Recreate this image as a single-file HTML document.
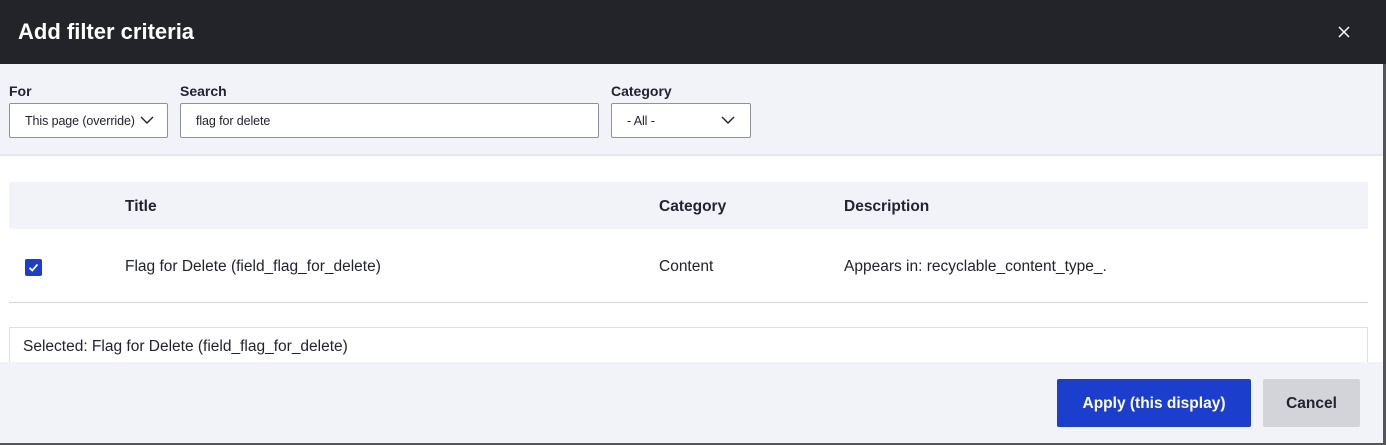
<!DOCTYPE html>
<html><head><style>
*{box-sizing:border-box;margin:0;padding:0}
body{width:1386px;height:445px;overflow:hidden;background:#fff;font-family:"Liberation Sans",sans-serif;color:#222330;position:relative}
.hdr{position:absolute;left:0;top:0;width:1386px;height:64px;background:#232429;color:#fff}
.hdr h1{position:absolute;left:18px;top:19px;font-size:22px;font-weight:bold}
.x{position:absolute;left:1338px;top:26px;width:12px;height:12px}
.filt{position:absolute;left:0;top:64px;width:1383px;height:92px;background:#f2f3f8;border-bottom:2px solid #e6e7ee}
.lbl{position:absolute;top:19px;font-size:14px;font-weight:bold}
.inp{position:absolute;top:39px;height:35px;background:#fff;border:1px solid #8e929c;border-radius:2px;font-size:12.5px;padding:10px 0 0 15px;letter-spacing:-0.1px}
.chev{position:absolute;top:12px;width:14px;height:9px}
.th{position:absolute;left:9px;top:182px;width:1359px;height:47px;background:#f2f3f8}
.th span,.row span{position:absolute;font-size:15.5px}
.th span{top:16px;font-weight:bold}
.row{position:absolute;left:9px;top:229px;width:1359px;height:74px;border-bottom:1px solid #d4d4dc}
.row span{top:29px}
.cb{position:absolute;left:16px;top:30px;width:17px;height:17px;background:#1b3ecc;border-radius:2px}
.sel{position:absolute;left:9px;top:327px;width:1359px;height:36px;border:1px solid #dedfe4;border-bottom:none;font-size:15.5px;padding:10px 0 0 13px;background:#fff}
.foot{position:absolute;left:0;top:362px;width:1383px;height:81px;background:#f2f3f8}
.btn{position:absolute;top:17px;height:48px;border-radius:2px;font-size:15.5px;font-weight:bold;text-align:center;padding-top:16px}
.edge-r{position:absolute;left:1383px;top:64px;width:3px;height:381px;background:#555}
.edge-b{position:absolute;left:0;top:443px;width:1386px;height:2px;background:#555}
</style></head><body>
<div class="hdr"><h1>Add filter criteria</h1>
<svg class="x" viewBox="0 0 12 12"><path d="M1 1L11 11M11 1L1 11" stroke="#fff" stroke-width="1.5"/></svg></div>
<div class="filt">
<div class="lbl" style="left:9px">For</div>
<div class="lbl" style="left:180px">Search</div>
<div class="lbl" style="left:611px">Category</div>
<div class="inp" style="left:9px;width:159px;padding-left:15px">This page (override)<svg class="chev" style="left:130px" viewBox="0 0 14 9"><path d="M1 1L7 7L13 1" stroke="#222" stroke-width="1.4" fill="none"/></svg></div>
<div class="inp" style="left:180px;width:419px">flag for delete</div>
<div class="inp" style="left:611px;width:140px">- All -<svg class="chev" style="left:109px" viewBox="0 0 14 9"><path d="M1 1L7 7L13 1" stroke="#222" stroke-width="1.4" fill="none"/></svg></div>
</div>
<div class="th"><span style="left:116px">Title</span><span style="left:650px">Category</span><span style="left:835px">Description</span></div>
<div class="row"><div class="cb"><svg viewBox="0 0 17 17" width="17" height="17"><path d="M4.5 8.8L7.3 11.5L12.5 5.5" stroke="#fff" stroke-width="1.8" fill="none"/></svg></div>
<span style="left:116px">Flag for Delete (field_flag_for_delete)</span><span style="left:650px">Content</span><span style="left:835px">Appears in: recyclable_content_type_.</span></div>
<div class="sel">Selected: Flag for Delete (field_flag_for_delete)</div>
<div class="foot">
<div class="btn" style="left:1057px;width:194px;background:#1b3ecc;color:#fff">Apply (this display)</div>
<div class="btn" style="left:1263px;width:97px;background:#d3d4d9;color:#222330">Cancel</div>
</div>
<div class="edge-r"></div><div class="edge-b"></div>
</body></html>
